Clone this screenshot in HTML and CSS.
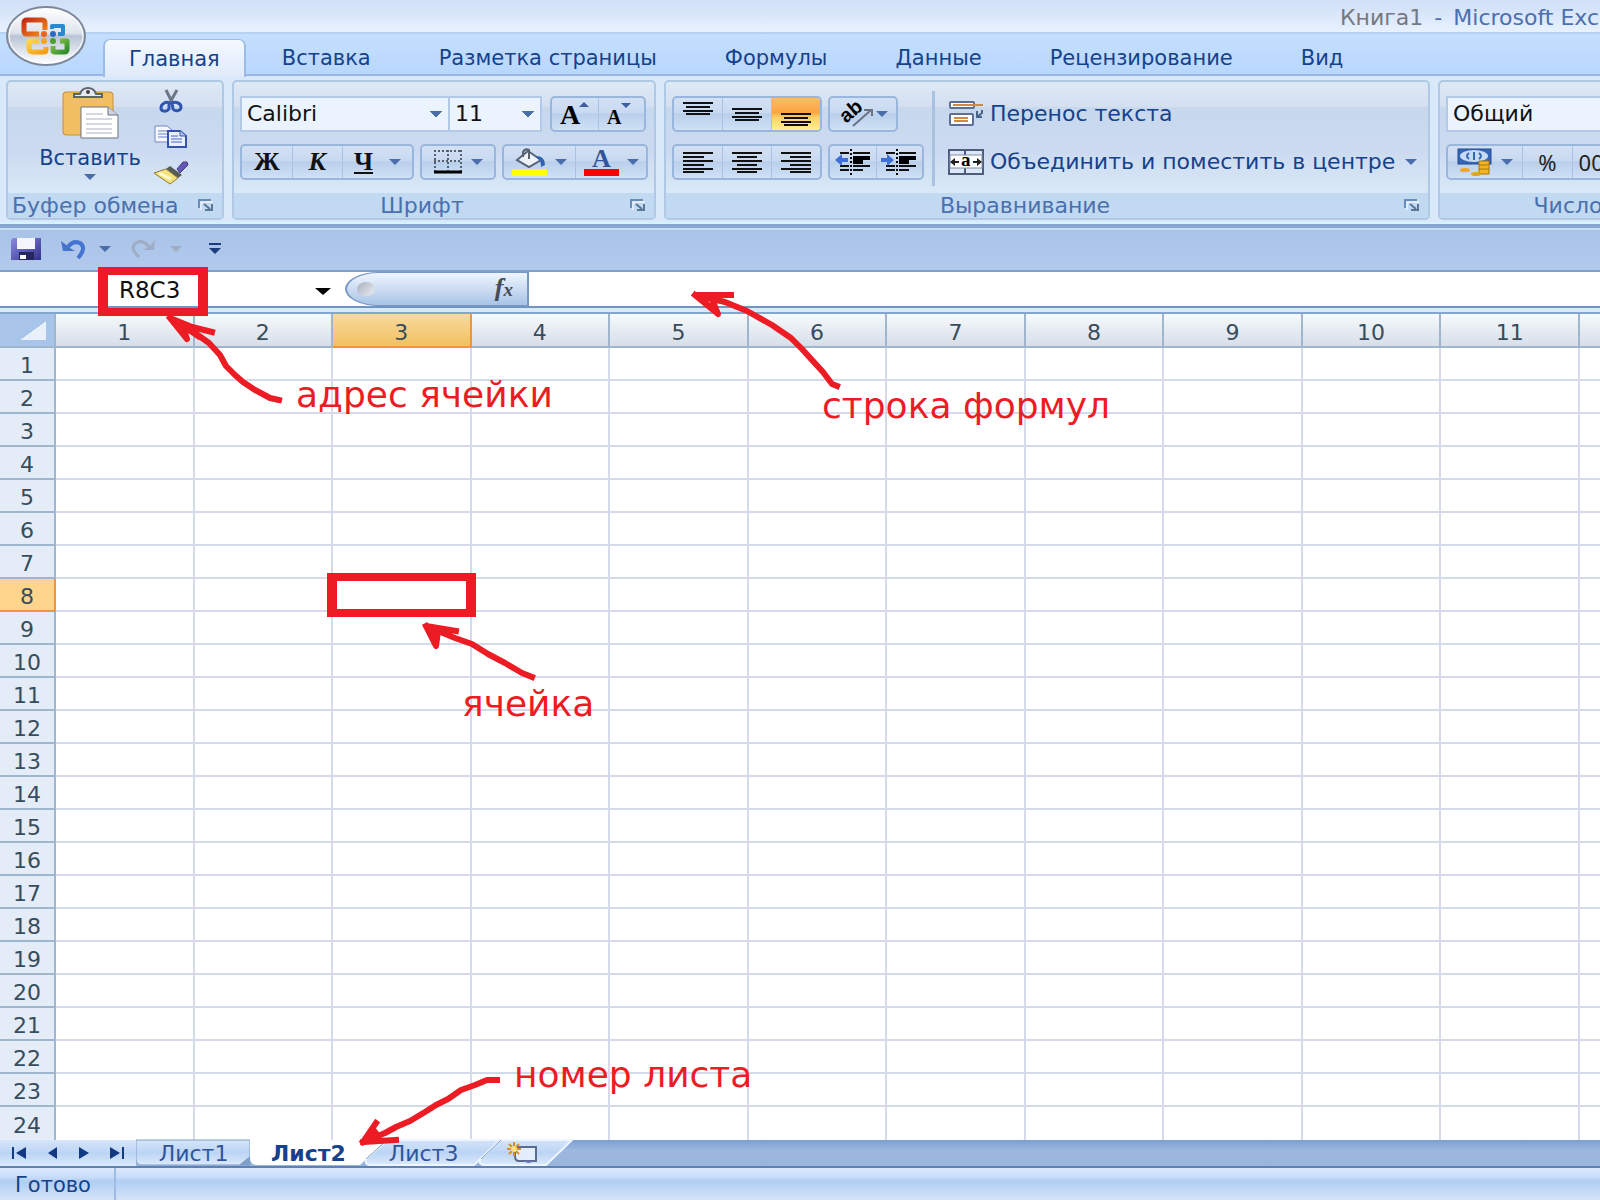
FILE: index.html
```html
<!DOCTYPE html>
<html lang="ru">
<head>
<meta charset="utf-8">
<title>Книга1 - Microsoft Excel</title>
<link rel="stylesheet" href="styles.css">
</head>
<body>
<svg class="defs" aria-hidden="true">
  <defs>
    <symbol id="caret" viewBox="0 0 12 6"><path d="M0 0H12L6 6Z" fill="currentColor"/></symbol>
    <symbol id="launcher" viewBox="0 0 18 14"><path d="M2 10V2H14" fill="none" stroke="#6a8cba" stroke-width="2"/><path d="M4 12V4H16" fill="none" stroke="#fff" stroke-width="1"/><path d="M7 6L13 11M15 6V12H8" fill="none" stroke="#5c7795" stroke-width="2"/></symbol>
    <linearGradient id="orb" x1="0" y1="0" x2="0" y2="1"><stop offset="0" stop-color="#fff"/><stop offset=".45" stop-color="#dfe4ec"/><stop offset=".5" stop-color="#b9c4d6"/><stop offset=".8" stop-color="#e6eaf1"/><stop offset="1" stop-color="#fff"/></linearGradient>
    <linearGradient id="lred" x1="0" y1="0" x2="1" y2="1"><stop offset="0" stop-color="#c62a12"/><stop offset="1" stop-color="#f08a1c"/></linearGradient>
    <linearGradient id="lyel" x1="0" y1="0" x2="1" y2="1"><stop offset="0" stop-color="#ffd54a"/><stop offset="1" stop-color="#f59a13"/></linearGradient>
    <linearGradient id="lgrn" x1="0" y1="0" x2="1" y2="1"><stop offset="0" stop-color="#8cc63f"/><stop offset="1" stop-color="#2e8b2e"/></linearGradient>
    <linearGradient id="sheet" x1="0" y1="0" x2="0" y2="1"><stop offset="0" stop-color="#d5e5fa"/><stop offset=".5" stop-color="#bcd4f4"/><stop offset="1" stop-color="#dbe9fb"/></linearGradient>
    <linearGradient id="floppy" x1="0" y1="0" x2="1" y2="1"><stop offset="0" stop-color="#8c8be0"/><stop offset="1" stop-color="#30308c"/></linearGradient>
  </defs>
</svg>

<header class="titlebar"><h1 class="title"><span class="book">Книга1</span><span>-</span><span>Microsoft Excel</span></h1></header>

<button class="office" aria-label="Office">
  <svg viewBox="0 0 82 64" width="82" height="64">
    <ellipse cx="41" cy="32" rx="39" ry="29" fill="url(#orb)" stroke="#7d879a" stroke-width="2"/>
    <ellipse cx="41" cy="32" rx="37" ry="27" fill="none" stroke="#fff" stroke-width="1"/>
    <g fill="none" stroke-width="5" stroke-linejoin="round">
      <path d="M34 30H22Q19 30 19 27V19Q19 16 22 16H37Q40 16 40 19V26" stroke="url(#lred)"/>
      <path d="M47 25V22H58V30H53" stroke="#2a8ad0" stroke-width="4"/>
      <path d="M34 37H24V44Q24 48 28 48H38Q41 48 41 46V43" stroke="url(#lyel)"/>
      <path d="M55 37H62V45Q62 48 59 48H50Q48 48 48 46V42" stroke="url(#lgrn)"/>
    </g>
    <circle cx="39" cy="30" r="3" fill="#f0631a"/><circle cx="48" cy="30" r="3" fill="#2a6bc8"/><circle cx="39" cy="37" r="3" fill="#f9a02a"/><circle cx="48" cy="37" r="3" fill="#4aa02c"/>
  </svg>
</button>

<nav class="tabs">
  <button class="tab active">Главная</button><button class="tab">Вставка</button><button class="tab">Разметка страницы</button><button class="tab">Формулы</button><button class="tab">Данные</button><button class="tab">Рецензирование</button><button class="tab">Вид</button>
</nav>

<section class="ribbon">
  <div class="group g-clip">
    <div class="body">
      <button class="paste">
        <svg width="60" height="54" viewBox="0 0 60 54"><rect x="3" y="5" width="50" height="43" rx="3" fill="#f2bf60" stroke="#c98f38"/><path d="M14 10V7H20Q22 1 28 1Q34 1 36 7H42V10Z" fill="#e8ebf0" stroke="#5f6470" stroke-width="2"/><circle cx="28" cy="5" r="2" fill="#444"/><path d="M21 20H48L58 28V51H21Z" fill="#fff" stroke="#6d7280"/><path d="M48 20V28H58" fill="#cdd3df" stroke="#6d7280"/><path d="M26 27H43M26 32H52M26 37H52M26 42H52M26 46H52" stroke="#a9b2c4"/></svg>
        <span>Вставить</span>
        <svg class="caret"><use href="#caret"/></svg>
      </button>
      <div class="stack">
        <button aria-label="Вырезать"><svg width="24" height="24" viewBox="0 0 24 24"><path d="M7 1L14 15M18 1L10 15" stroke="#6d7686" stroke-width="3"/><path d="M10 14C7 12 2 15 2 19S8 23 10 20ZM13 14C16 12 22 14 22 18S16 23 14 20Z" fill="none" stroke="#2f55b0" stroke-width="3"/></svg></button>
        <button aria-label="Копировать"><svg width="34" height="24" viewBox="0 0 34 24"><path d="M1 1H13L18 5V17H1Z" fill="#f5f8ff" stroke="#7389bb"/><path d="M4 6H13M4 9H14M4 12H14" stroke="#6582c4"/><path d="M14 6H26L32 11V22H14Z" fill="#e9f0ff" stroke="#3354ad" stroke-width="2"/><path d="M26 6V11H32" fill="#b7c8f0" stroke="#3354ad"/><path d="M17 11H24M17 14H28M17 17H28" stroke="#4768bd"/></svg></button>
        <button aria-label="Формат по образцу"><svg width="36" height="24" viewBox="0 0 36 24"><path d="M24 8L30 1H34L35 4L27 12Z" fill="#6558b5" stroke="#473c91"/><path d="M17 5L29 14L25 17L13 8Z" fill="#555b55"/><path d="M13 8L25 17L17 23L1 12Z" fill="#f8e27c" stroke="#8c7a38"/><path d="M6 12L18 18" stroke="#fffbd0" stroke-width="3"/></svg></button>
      </div>
    </div>
    <div class="label"><span>Буфер обмена</span><button class="launch" aria-label="Параметры буфера"><svg width="18" height="14"><use href="#launcher"/></svg></button></div>
  </div>

  <div class="group g-font">
    <div class="body rows">
      <div class="row">
        <div class="combo"><select class="font-name" aria-label="Шрифт"><option>Calibri</option></select><select class="font-size" aria-label="Размер"><option>11</option></select></div>
        <div class="bar two">
          <button aria-label="Увеличить размер"><svg width="36" height="30" viewBox="0 0 36 30"><text x="3" y="25" class="ser" font-size="28">A</text><path d="M22 8L27 3L32 8Z" fill="#3d5f9e"/></svg></button>
          <button aria-label="Уменьшить размер"><svg width="36" height="30" viewBox="0 0 36 30"><text x="4" y="25" class="ser" font-size="20">A</text><path d="M18 4H28L23 9Z" fill="#3d5f9e"/></svg></button>
        </div>
      </div>
      <div class="row">
        <div class="bar biu">
          <button class="ser">Ж</button><button class="ser it">К</button><button class="ser wide"><span class="un">Ч</span><svg class="caret"><use href="#caret"/></svg></button>
        </div>
        <div class="bar brd"><button aria-label="Границы"><svg width="30" height="26" viewBox="0 0 30 26"><path d="M1 2H29M1 12H29M2 1V22M15 1V22M28 1V22" fill="none" stroke="#54606f" stroke-width="2" stroke-dasharray="2 2"/><path d="M1 23H29" stroke="#000" stroke-width="3"/></svg><svg class="caret"><use href="#caret"/></svg></button></div>
        <div class="bar two fill">
          <button aria-label="Цвет заливки"><svg width="36" height="28" viewBox="0 0 36 28"><path d="M17 3L30 12L18 19L6 12Z" fill="#edf1f8" stroke="#56627a" stroke-width="2"/><path d="M12 9V4Q14 0 18 2V11" fill="none" stroke="#59606e" stroke-width="2"/><path d="M25 8Q34 8 34 17L30 19Q30 12 27 11Z" fill="#2f62b5"/><rect x="1" y="21" width="35" height="7" fill="#ff0"/></svg><svg class="caret"><use href="#caret"/></svg></button>
          <button aria-label="Цвет текста"><svg width="36" height="28" viewBox="0 0 36 28"><text x="9" y="19" class="ser blue" font-size="26">A</text><rect x="1" y="21" width="35" height="7" fill="#f00"/></svg><svg class="caret"><use href="#caret"/></svg></button>
        </div>
      </div>
    </div>
    <div class="label"><span>Шрифт</span><button class="launch" aria-label="Параметры шрифта"><svg width="18" height="14"><use href="#launcher"/></svg></button></div>
  </div>

  <div class="group g-align">
    <div class="body split">
      <div class="rows">
        <div class="row">
          <div class="bar three">
            <button aria-label="По верхнему краю"><svg width="32" height="30"><path d="M1 4H31M4 8H28M1 12H31M4 15H28" class="ln"/></svg></button>
            <button aria-label="По середине"><svg width="32" height="30"><path d="M1 10H31M4 14H28M1 18H31M4 21H28" class="ln"/></svg></button>
            <button class="on" aria-label="По нижнему краю"><svg width="32" height="30"><path d="M1 15H31M4 19H28M1 23H31M4 26H28" class="ln"/></svg></button>
          </div>
          <div class="bar ori"><button aria-label="Ориентация"><svg width="36" height="28" viewBox="0 0 36 28"><text x="0" y="0" transform="translate(10 26) rotate(-40)" class="ab" font-size="20" dy="-3">ab</text><path d="M15 26L33 10M26 10H34V16" fill="none" stroke="#687385" stroke-width="2"/></svg><svg class="caret"><use href="#caret"/></svg></button></div>
        </div>
        <div class="row">
          <div class="bar three">
            <button aria-label="По левому краю"><svg width="32" height="24"><path d="M1 3H31M1 7H22M1 11H31M1 15H22M1 19H31M1 22H22" class="ln"/></svg></button>
            <button aria-label="По центру"><svg width="32" height="24"><path d="M1 3H31M6 7H26M1 11H31M6 15H26M1 19H31M6 22H26" class="ln"/></svg></button>
            <button aria-label="По правому краю"><svg width="32" height="24"><path d="M1 3H31M10 7H31M1 11H31M10 15H31M1 19H31M10 22H31" class="ln"/></svg></button>
          </div>
          <div class="bar two ind">
            <button aria-label="Уменьшить отступ"><svg width="36" height="28"><path d="M5 5H14M18 5H35M18 18H35M5 18H14M5 22H14M18 22H28" class="ln"/><path d="M18 10H35M18 14H28" stroke="#000" stroke-width="4"/><path d="M16 1V27" stroke="#000" stroke-width="2" stroke-dasharray="2 2"/><path d="M0 12L7 6V10H13V14H7V18Z" fill="#3f6fd8"/></svg></button>
            <button aria-label="Увеличить отступ"><svg width="36" height="28"><path d="M5 5H14M18 5H35M18 18H35M5 18H14M5 22H14M18 22H28" class="ln"/><path d="M18 10H35M18 14H28" stroke="#000" stroke-width="4"/><path d="M16 1V27" stroke="#000" stroke-width="2" stroke-dasharray="2 2"/><path d="M13 12L6 6V10H0V14H6V18Z" fill="#3f6fd8"/></svg></button>
          </div>
        </div>
      </div>
      <div class="rows text">
        <button class="cmd"><svg width="36" height="28" viewBox="0 0 36 28"><rect x="2" y="2" width="24" height="6" rx="1" fill="#fff" stroke="#5a7096" stroke-width="2"/><path d="M5 5H35" stroke="#c98a4d" stroke-width="2"/><rect x="2" y="14" width="23" height="11" rx="1" fill="#fff" stroke="#5a7096" stroke-width="2"/><path d="M6 18H20M6 21H20" stroke="#d08a45" stroke-width="2"/><path d="M34 10V13L29 17M29 11V17H34" stroke="#4a6488" stroke-width="2" fill="none"/></svg><span>Перенос текста</span></button>
        <button class="cmd"><svg width="36" height="28" viewBox="0 0 36 28"><rect x="1" y="2" width="34" height="24" fill="#dce7f7" stroke="#4e5d7c" stroke-width="2"/><path d="M17 2V8M17 20V26" stroke="#4e5d7c" stroke-width="2"/><rect x="2" y="7" width="32" height="13" fill="#fff" stroke="#7f8da8"/><text x="13" y="18" class="ser" font-size="19">a</text><path d="M3 14H11M25 14H33" stroke="#222" stroke-width="2"/><path d="M7 10L2 14L7 18ZM29 10L34 14L29 18Z" fill="#222"/></svg><span>Объединить и поместить в центре</span><svg class="caret"><use href="#caret"/></svg></button>
      </div>
    </div>
    <div class="label"><span>Выравнивание</span><button class="launch" aria-label="Параметры выравнивания"><svg width="18" height="14"><use href="#launcher"/></svg></button></div>
  </div>

  <div class="group g-num">
    <div class="body rows">
      <div class="row"><select class="num-format" aria-label="Числовой формат"><option>Общий</option></select></div>
      <div class="row"><div class="bar num">
        <button class="wide" aria-label="Финансовый формат"><svg width="36" height="28" viewBox="0 0 36 28"><rect x="1" y="1" width="33" height="15" fill="#3567b8" stroke="#264a91"/><ellipse cx="17" cy="8" rx="14" ry="6" fill="#c8dbf4"/><path d="M12 5Q8 8 12 11M17 4V12M22 5Q26 8 22 11" fill="none" stroke="#3567b8" stroke-width="2"/><path d="M22 13H32V26H22Z" fill="#f2b51f" stroke="#a8740e"/><path d="M22 17H32M22 21H32" stroke="#a8740e"/><ellipse cx="8" cy="22" rx="5" ry="2" fill="#f2a51f"/><ellipse cx="19" cy="26" rx="5" ry="2" fill="#e0a51f"/></svg><svg class="caret"><use href="#caret"/></svg></button>
        <button>%</button><button class="zeros">000</button>
      </div></div>
    </div>
    <div class="label"><span>Число</span></div>
  </div>
</section>

<div class="qat">
  <button aria-label="Сохранить"><svg width="32" height="24" viewBox="0 0 32 24"><path d="M3 1H31V23H1V3Z" fill="url(#floppy)"/><rect x="7" y="1" width="18" height="11" fill="#f4f5ff"/><rect x="9" y="15" width="15" height="8" fill="#26265e"/><rect x="10" y="18" width="6" height="4" fill="#fff"/></svg></button>
  <button class="undo" aria-label="Отменить"><svg width="28" height="22" viewBox="0 0 28 22"><path d="M8 9Q13 2 20 5Q27 10 18 20" fill="none" stroke="#4673cf" stroke-width="4"/><path d="M1 3L3 13H15L10 10L5 6Z" fill="#4673cf"/></svg><svg class="caret"><use href="#caret"/></svg></button>
  <button class="redo" disabled aria-label="Вернуть"><svg width="28" height="22" viewBox="0 0 28 22"><path d="M20 9Q14 1 7 5Q0 10 10 19" fill="none" stroke="#9fadc4" stroke-width="3"/><path d="M26 2L25 12H14L20 9Z" fill="#9fadc4"/></svg><svg class="caret"><use href="#caret"/></svg></button>
  <button class="more" aria-label="Настройка панели"><svg width="14" height="12" viewBox="0 0 14 12"><path d="M1 1H13" stroke="#1c3d7c" stroke-width="2"/><path d="M1 5H13L7 11Z" fill="#1c3d7c"/></svg></button>
</div>

<div class="formula">
  <input class="name" value="R8C3" aria-label="Имя">
  <svg class="name-caret" width="16" height="7"><path d="M0 0H16L8 7Z"/></svg>
  <button class="fx" aria-label="Вставить функцию"><span class="knob"></span><span class="f">f<small>x</small></span></button>
  <input class="expr" aria-label="Строка формул">
</div>

<main>
  <table class="grid">
    <colgroup id="cols"></colgroup>
    <thead><tr id="head"></tr></thead>
    <tbody id="rows"></tbody>
  </table>
</main>

<div class="sheets">
  <svg class="shapes" width="580" height="26" aria-hidden="true">
    <path d="M136 0H250V25H142Q136 25 136 19Z" fill="url(#sheet)" stroke="#7f9fc9"/>
    <path d="M488 0H572L546 25H486Q476 25 482 17Z" fill="url(#sheet)" stroke="#eef5ff" stroke-width="2"/>
    <path d="M388 0H500L474 25H372Q362 25 368 17Z" fill="url(#sheet)" stroke="#eef5ff" stroke-width="2"/>
    <path d="M250 0H386L360 25H258Q250 25 250 18Z" fill="#fff"/>
    <path d="M387 0L366 19M501 0L481 19" stroke="#7f9fc9"/>
    <path d="M239 25L250 16V25Z" fill="#7f9fc9"/>
  </svg>
  <div class="nav">
    <button aria-label="Первый лист"><svg width="16" height="12"><path d="M1 0V12" stroke="#123a82" stroke-width="2"/><path d="M14 0V12L4 6Z"/></svg></button>
    <button aria-label="Предыдущий лист"><svg width="16" height="12"><path d="M13 0V12L4 6Z"/></svg></button>
    <button aria-label="Следующий лист"><svg width="16" height="12"><path d="M3 0V12L13 6Z"/></svg></button>
    <button aria-label="Последний лист"><svg width="16" height="12"><path d="M2 0V12L12 6Z"/><path d="M15 0V12" stroke="#123a82" stroke-width="2"/></svg></button>
  </div>
  <button class="sheet">Лист1</button><button class="sheet current">Лист2</button><button class="sheet">Лист3</button>
  <button class="new" aria-label="Новый лист"><svg width="32" height="22" viewBox="0 0 32 22"><path d="M9 5H30V19H13Q9 19 9 14Z" fill="#e4edfb" stroke="#5b6c93" stroke-width="2"/><path d="M18 19Q22 23 28 19" fill="#6878b0"/><path d="M8 0V14M1 7H15M3 2L13 12M13 2L3 12" stroke="#d98f1c" stroke-width="2"/><circle cx="8" cy="7" r="3" fill="#ffe27a"/></svg></button>
</div>
<footer class="status"><span class="ready">Готово</span></footer>

<div class="notes">
  <svg width="860" height="1160" aria-hidden="true">
    <g class="ink">
      <path d="M279 400L270 398L255 390L243 382L235 375L226 366L220 355L209 343L195 333L170 318L192 327L212 332M170 318L187 339L182 325L198 336M172 320L186 332"/>
      <path d="M837 386L832 384L823 372L812 360L802 349L791 338L772 325L747 311L725 302L695 295H731M695 295L718 314L712 299M699 298L712 308"/>
      <path d="M532 677L522 673L505 663L488 654L472 644L455 638L426 626L456 631M426 626L436 646L438 631M428 628L436 638"/>
      <path d="M497 1080H487L475 1085L461 1090L448 1099L436 1105L425 1112L410 1121L396 1127L385 1133L363 1142L376 1123M363 1142L375 1132M363 1142L396 1140"/>
    </g>
  </svg>
  <div class="frame frame-name"></div>
  <div class="frame frame-cell"></div>
  <span class="note n1">адрес ячейки</span>
  <span class="note n2">строка формул</span>
  <span class="note n3">ячейка</span>
  <span class="note n4">номер листа</span>
</div>
<script src="script.js"></script>
</body>
</html>
```
FILE: styles.css
```css
* { box-sizing: border-box; }
body { margin: 0; position: relative; min-height: 100vh; overflow-x: hidden; background: #bfdbff; color: #15428b; font: 21px/24px "DejaVu Sans", Verdana, sans-serif; }
button, input, select { font: inherit; color: inherit; margin: 0; padding: 0; border: 0; background: none; }
button { display: flex; align-items: center; justify-content: center; }
svg { display: block; flex: none; overflow: visible; }
.defs { position: absolute; width: 0; height: 0; }
.caret { width: 12px; height: 6px; color: #4a6ea9; }

.titlebar { height: 34px; background: linear-gradient(#cfe0f8, #dbe7fb 50%, #e8f2fe); border-bottom: 2px solid #b4d3f2; overflow: hidden; }
.title { margin: 0; padding: 5px 0 0 1340px; display: flex; gap: 11px; font-size: 22px; line-height: 26px; font-weight: normal; white-space: nowrap; color: #4c6fae; }
.book { color: #75797f; }
.office { position: absolute; left: 5px; top: 4px; z-index: 2; }

.tabs { display: flex; height: 42px; padding: 5px 0 0 103px; background: linear-gradient(#c4dfff, #b9d7fd); border-bottom: 2px solid #98b9e6; }
.tab { height: 37px; padding: 0 34px; white-space: nowrap; }
.tab.active { height: 38px; padding: 0 24px; margin-right: 2px; border: 2px solid #9cbce8; border-width: 1px 2px 0; border-radius: 7px 7px 0 0; background: linear-gradient(#f4f9ff, #dfeafa); }

.ribbon { display: flex; gap: 8px; padding: 4px 0 4px 6px; height: 148px; background: #d9e9f9; border-bottom: 2px solid #d5f3ff; overflow: hidden; }
.group { flex: none; display: flex; flex-direction: column; height: 140px; border: 2px solid #afc8e3; border-radius: 5px; background: linear-gradient(#dee8f5, #d4e0f1 18%, #c7d8ed 19%, #cbdaf0 50%, #d9e8f6 80%); overflow: hidden; }
.g-clip { width: 218px; }
.g-font { width: 424px; }
.g-align { width: 766px; }
.g-num { width: 260px; }
.body { flex: 1; display: flex; }
.label { position: relative; height: 25px; background: #c1d9f1; color: #4a70ad; text-align: center; padding-right: 44px; line-height: 25px; font-size: 22px; white-space: nowrap; }
.g-clip .label { text-align: left; padding-left: 4px; }
.g-num .label { padding-right: 0; }
.launch { position: absolute; right: 7px; top: 5px; }

.paste { flex-direction: column; justify-content: flex-start; width: 146px; padding: 5px 0 0 18px; }
.paste span { margin: 5px 0 4px; }
.stack { display: flex; flex-direction: column; align-items: center; gap: 12px; width: 34px; padding-top: 7px; }

.rows { display: flex; flex-direction: column; gap: 12px; padding: 14px 6px 0; }
.row { display: flex; gap: 6px; height: 36px; }
select { appearance: none; height: 36px; color: #111; background: #eaf3fe; border: 2px solid #b2cae8; padding: 0 5px; font-size: 22px;
  background-image: linear-gradient(to bottom left, #4a6ea9 50%, transparent 51%), linear-gradient(to bottom right, #4a6ea9 50%, transparent 51%);
  background-size: 6px 6px; background-repeat: no-repeat; background-position: right 12px center, right 6px center; }
.combo { display: flex; margin-right: 2px; }
.font-name { width: 210px; }
.font-size { width: 92px; border-left: 0; }
.num-format { flex: 1; }
.bar { display: flex; border: 2px solid #9ab6dc; border-radius: 5px; background: linear-gradient(#d3e1f4, #c8d9f0 45%, #b9cfeb 50%, #cfe0f7); }
.bar button { flex: 1; gap: 8px; }
.bar button + button { border-left: 1px solid #a9c2e2; }
.ser { font-family: "Liberation Serif", "Times New Roman", serif; font-weight: bold; }
button.ser { font-size: 26px; color: #111; }
.it { font-style: italic; }
.un { text-decoration: underline; }
.blue { fill: #2f559c; }
.bar.two { width: 96px; }
.bar.biu { width: 174px; }
.bar.biu .wide { flex: 0 0 70px; gap: 16px; }
.bar.brd { width: 76px; }
.bar.fill { width: 146px; }
.bar.three { width: 150px; }
.bar.ori { width: 70px; }
.bar.ori button { gap: 2px; }
.bar .on { border-radius: 0 3px 3px 0; background: linear-gradient(#fdbb6c, #fba53f 45%, #fdd066 60%, #fef08d); }
.ln { stroke: #111; stroke-width: 2px; fill: none; }
.ab { font-family: "Liberation Sans", Arial, sans-serif; font-weight: bold; }
.split .text { margin: 9px 0 7px; padding: 5px 0 0 13px; border-left: 3px solid #a9c2e0; }
.split .rows { padding-right: 8px; }
.cmd { gap: 6px; height: 36px; justify-content: flex-start; white-space: nowrap; }
.split .cmd { font-size: 22px; }
.cmd .caret { margin-left: 4px; }
.bar.num { width: 240px; color: #222; }
.bar.num button { flex: 0 0 50px; font: 22px "Noto Sans", sans-serif; }
.bar.num .wide { flex-basis: 74px; }

.qat { display: flex; align-items: center; height: 46px; padding: 4px 0 0 10px; background: linear-gradient(#86a5cf 0 4px, #c8dcf5 4px 6px, #a9c3e8 6px, #b1c9ec); }
.qat .undo { margin-left: 18px; gap: 11px; }
.qat .redo { margin-left: 18px; gap: 13px; }
.redo .caret { color: #9fadc4; }
.qat .more { margin-left: 26px; }

.formula { display: flex; height: 44px; padding-left: 2px; border-top: 2px solid #7f9fc9; background: linear-gradient(#fff 0 34px, #6f96c2 34px 36px, #d9e9f8 36px 40px, #83a7cc 40px); }
.formula > * { height: 34px; }
.name { flex: 0 0 313px; min-width: 0; padding: 2px 0 0 117px; font-size: 23px; color: #111; }
.formula .name-caret { height: 7px; margin: 16px 14px 0 0; }
.fx { width: 184px; padding: 0 14px 0 10px; justify-content: space-between; border: 2px solid #7798c4; border-width: 1px 2px 1px 2px; border-radius: 34px 0 0 34px / 17px 0 0 17px; background: linear-gradient(#eff5fe, #c5d7f0 60%, #a8c4e8); }
.knob { width: 18px; height: 14px; border-radius: 50%; background: linear-gradient(135deg, #a7aebb, #eceff4); }
.f { font: italic bold 26px/28px "Liberation Serif", serif; color: #444b57; }
.f small { font-size: 19px; }
.expr { flex: 1; min-width: 0; color: #111; }

.grid { width: 100%; table-layout: fixed; border-collapse: separate; border-spacing: 0; background: #fff; font-size: 22px; color: #374c5c; }
.corner-col { width: 56px; }
.edge-col { width: 20px; }
.grid th { font-weight: normal; padding: 4px 0 0; height: 33px; line-height: 27px; text-align: center; border-right: 2px solid #9eb6ce; border-bottom: 2px solid #9eb6ce; background: #e4ecf7; }
.grid thead th { height: 34px; background: linear-gradient(#f7fafc, #d6dee9); }
.grid thead .corner { background: linear-gradient(to bottom right, transparent 50%, #e8f0fa 51%) right 8px bottom 6px / 26px 19px no-repeat, #a9c4e9; }
.grid thead .sel { background: linear-gradient(#f9d99f, #f1c15f); border-color: #f29536; }
.grid tbody .sel { background: #ffd58d; border-color: #f29536; }
.grid td { padding: 0; border-right: 2px solid #d4dae9; border-bottom: 2px solid #d4dae9; }
.grid tr > :last-child { border-right: 0; }
.grid tbody tr:last-child > * { border-bottom: 0; }

.sheets { position: relative; display: flex; height: 28px; border-bottom: 2px solid #5f82b5; background: linear-gradient(#7d9fcf, #9db8df 40%, #9ab5dc); color: #30559a; font-size: 22px; }
.sheets > * { position: relative; }
.sheets .shapes { position: absolute; left: 0; top: 0; }
.nav { display: flex; justify-content: space-between; width: 136px; padding: 0 12px; background: linear-gradient(#d5e5fa, #bcd4f4 50%, #dbe9fb); }
.nav svg { fill: #123a82; }
.sheet { width: 115px; padding-top: 2px; }
.sheet.current { font-weight: bold; color: #15428b; }
.new { width: 82px; }
.status { height: 32px; background: linear-gradient(#dbe9fc, #c7dcf8 30%, #b0cdf3 40%, #d5e4f7); display: flex; }
.ready { width: 116px; padding: 5px 0 0 15px; border-right: 2px solid #9dbbe3; }

.notes { position: absolute; left: 0; top: 0; pointer-events: none; }
.ink path { fill: none; stroke: #ed1c24; stroke-width: 6px; stroke-linejoin: round; stroke-linecap: square; }
.frame { position: absolute; border: solid #ed1c24; border-width: 8px 10px; }
.frame-name { left: 98px; top: 267px; width: 110px; height: 49px; }
.frame-cell { left: 327px; top: 573px; width: 149px; height: 44px; }
.note { position: absolute; font-family: "Comic Sans MS", "DejaVu Sans", sans-serif; font-size: 36px; line-height: 40px; color: #ed1c24; white-space: nowrap; }
.n1 { left: 296px; top: 375px; }
.n2 { left: 822px; top: 386px; }
.n3 { left: 462px; top: 684px; }
.n4 { left: 514px; top: 1055px; }
```
FILE: script.js
```js
const COLUMNS = 11, ROWS = 24, ACTIVE_COL = 3, ACTIVE_ROW = 8;
let cols = '<col class="corner-col">', head = '<th class="corner"></th>', rows = '';
for (let c = 1; c <= COLUMNS; c++) {
  cols += '<col>';
  head += `<th scope="col"${c === ACTIVE_COL ? ' class="sel"' : ''}>${c}</th>`;
}
for (let r = 1; r <= ROWS; r++) {
  rows += `<tr><th scope="row"${r === ACTIVE_ROW ? ' class="sel"' : ''}>${r}</th>${'<td></td>'.repeat(COLUMNS + 1)}</tr>`;
}
document.getElementById('cols').innerHTML = cols + '<col class="edge-col">';
document.getElementById('head').innerHTML = head + '<th></th>';
document.getElementById('rows').innerHTML = rows;
```
